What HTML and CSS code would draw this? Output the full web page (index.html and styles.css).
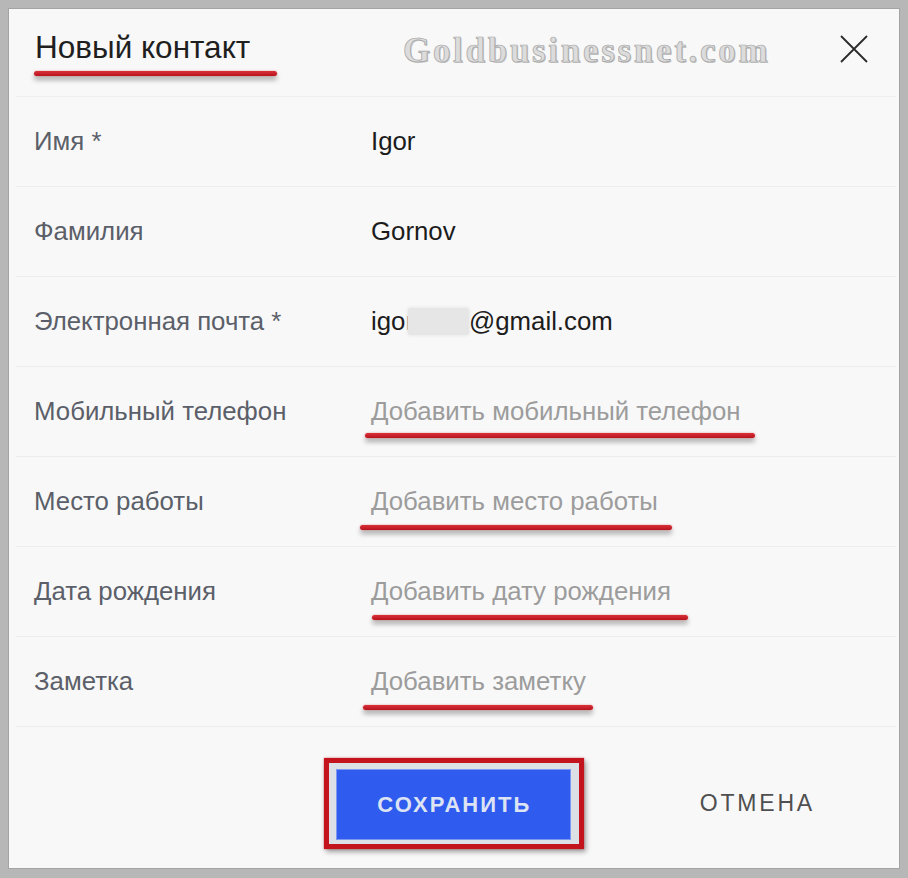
FILE: index.html
```html
<!DOCTYPE html>
<html lang="ru">
<head>
<meta charset="utf-8">
<title>Новый контакт</title>
<link rel="stylesheet" href="styles.css">
</head>
<body>
<div class="dialog">
  <div class="dialog-header">
    <h1 class="dialog-title">Новый контакт</h1>
    <span class="watermark">Goldbusinessnet.com</span>
    <button class="close-btn" aria-label="Закрыть">
      <svg width="28" height="28" viewBox="0 0 28 28"><path d="M1 1 L27 27 M27 1 L1 27" stroke="#2a2a2a" stroke-width="1.8" fill="none"/></svg>
    </button>
    <span class="mark mark-title"></span>
  </div>

  <div class="field-row">
    <div class="field-label">Имя *</div>
    <div class="field-value">Igor</div>
  </div>
  <div class="field-row">
    <div class="field-label">Фамилия</div>
    <div class="field-value">Gornov</div>
  </div>
  <div class="field-row">
    <div class="field-label">Электронная почта *</div>
    <div class="field-value">igor<span class="redact"></span>@gmail.com</div>
  </div>
  <div class="field-row">
    <div class="field-label">Мобильный телефон</div>
    <div class="field-value placeholder">Добавить мобильный телефон</div>
    <span class="mark mark-phone"></span>
  </div>
  <div class="field-row">
    <div class="field-label">Место работы</div>
    <div class="field-value placeholder">Добавить место работы</div>
    <span class="mark mark-work"></span>
  </div>
  <div class="field-row">
    <div class="field-label">Дата рождения</div>
    <div class="field-value placeholder">Добавить дату рождения</div>
    <span class="mark mark-birth"></span>
  </div>
  <div class="field-row">
    <div class="field-label">Заметка</div>
    <div class="field-value placeholder">Добавить заметку</div>
    <span class="mark mark-note"></span>
  </div>

  <div class="dialog-footer">
    <div class="save-frame">
      <button class="btn-save">СОХРАНИТЬ</button>
    </div>
    <button class="btn-cancel">ОТМЕНА</button>
  </div>
</div>
</body>
</html>
```

FILE: styles.css
```css
* { box-sizing: border-box; }

html, body {
  margin: 0;
  padding: 0;
}

body {
  background: #b7b7b7;
  width: 908px;
  height: 878px;
  padding: 9px 9px 10px 9px;
  font-family: "Liberation Sans", Arial, sans-serif;
}

.dialog {
  width: 890px;
  height: 859px;
  background: #f8f8f8;
  box-shadow: 0 0 0 1px #a4a4a4;
  display: flex;
  flex-direction: column;
}

.dialog-header {
  position: relative;
  height: 88px;
  padding: 20px 28px 0 19px;
  display: flex;
  align-items: flex-start;
  justify-content: space-between;
  border-bottom: 1px solid #efefef;
  margin: 0 3px 0 7px;
}

.dialog-title {
  margin: 0;
  font-size: 31.5px;
  line-height: 36px;
  font-weight: normal;
  color: #1f1f1f;
}

.watermark {
  position: absolute;
  left: 387px;
  top: 22px;
  font-family: "Liberation Serif", "Times New Roman", serif;
  font-weight: bold;
  font-size: 35px;
  letter-spacing: 2.7px;
  line-height: 40px;
  color: #dcdcdc;
  -webkit-text-stroke: 0.7px #a3a3a3;
  text-shadow: 1px 1px 0 #c4c4c4;
}

.close-btn {
  border: 0;
  background: none;
  padding: 0;
  margin-top: 6px;
  width: 28px;
  height: 28px;
  display: block;
}

.close-btn svg { display: block; }

.field-row {
  position: relative;
  height: 90px;
  margin: 0 3px 0 7px;
  padding-left: 18px;
  display: flex;
  align-items: center;
  border-bottom: 1px solid #ececec;
  font-size: 25.8px;
}

.field-label {
  width: 337px;
  flex: none;
  color: #5b5f69;
}

.field-value {
  color: #1c1c1c;
  display: flex;
  align-items: center;
}

.field-value.placeholder {
  color: #9c9c9c;
}

.redact {
  display: inline-block;
  width: 61px;
  height: 27px;
  margin-left: -6px;
  background: #e6e6e6;
  border-radius: 3px;
  box-shadow: 0 0 3px 1px #e9e9e9;
}

.mark {
  position: absolute;
  height: 5px;
  border-radius: 3px;
  background: linear-gradient(#d9313a, #b8121c);
  box-shadow: 0 4px 5px rgba(0, 0, 0, 0.32), 0 0 2px rgba(220, 40, 50, 0.5);
}

.mark-title { left: 18px; top: 62px; width: 243px; }
.mark-phone { left: 349px; top: 66px; width: 390px; }
.mark-work  { left: 344px; top: 68px; width: 312px; }
.mark-birth { left: 356px; top: 68px; width: 316px; }
.mark-note  { left: 347px; top: 68px; width: 230px; }

.dialog-footer {
  flex: 1;
  display: flex;
  justify-content: flex-end;
  align-items: flex-start;
  padding: 31px 84px 0 0;
}

.save-frame {
  border: 5px solid #c3131c;
  padding: 6px 8px 4px 7px;
  background: #dcdfe6;
  box-shadow: 2px 3px 5px rgba(0, 0, 0, 0.35), 0 0 2px rgba(220, 40, 50, 0.6);
}

.btn-save {
  display: block;
  width: 235px;
  height: 71px;
  border: 0;
  background: #2f5bef;
  box-shadow: inset 0 0 0 1px #7d97f2;
  color: #dce3f3;
  font-family: "Liberation Sans", Arial, sans-serif;
  font-weight: bold;
  font-size: 22px;
  letter-spacing: 2px;
  padding: 0 0 0 2px;
}

.btn-cancel {
  margin-left: 116px;
  margin-top: 27px;
  border: 0;
  background: none;
  padding: 0;
  color: #4f4f4f;
  font-family: "Liberation Sans", Arial, sans-serif;
  font-size: 23px;
  letter-spacing: 2.8px;
  line-height: 36px;
}
```
